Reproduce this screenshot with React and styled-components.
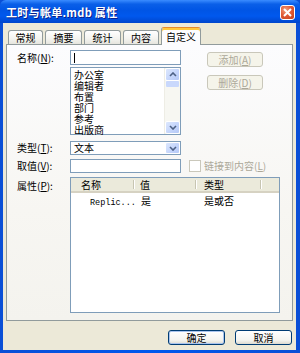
import React from 'react';
import styled, { createGlobalStyle } from 'styled-components';

const GlobalStyle = createGlobalStyle`
  html, body {
    margin: 0;
    padding: 0;
    background: #fff;
  }
  body {
    font-family: 'Noto Sans CJK SC', 'Noto Sans', sans-serif;
    font-size: 10px;
    color: #000;
  }
`;

const tabs = [
  { label: '常规', width: 35 },
  { label: '摘要', width: 37 },
  { label: '统计', width: 37 },
  { label: '内容', width: 36 },
  { label: '自定义', width: 40, active: true }
];

const names = ['办公室', '编辑者', '布置', '部门', '参考', '出版商'];

const Chevron = ({ up }) => (
  <svg width='8' height='5' viewBox='0 0 8 5'>
    <path
      d={up ? 'M1 4 L4 1 L7 4' : 'M1 1 L4 4 L7 1'}
      fill='none'
      stroke='#4d6185'
      strokeWidth='1.6'
    />
  </svg>
);

const App = () => {
  return (
    <>
      <GlobalStyle />
      <Window>
        <TitleBar>
          <Title>工时与帐单.mdb 属性</Title>
          <CloseButton>
            <svg width='9' height='9' viewBox='0 0 9 9'>
              <path d='M1 1 L8 8 M8 1 L1 8' stroke='#fff' strokeWidth='2' />
            </svg>
          </CloseButton>
        </TitleBar>
        <Body>
          <TabRow>
            {tabs.map(t => (
              <Tab key={t.label} $active={t.active} $width={t.width}>
                {t.label}
              </Tab>
            ))}
          </TabRow>
          <Panel>
            <Row>
              <Label $top={2}>
                名称(<u>N</u>):
              </Label>
              <Column>
                <TextBox>
                  <Caret />
                </TextBox>
                <ListBox>
                  <Items>
                    {names.map(n => (
                      <Item key={n}>{n}</Item>
                    ))}
                  </Items>
                  <ScrollBar>
                    <ArrowButton>
                      <Chevron up />
                    </ArrowButton>
                    <Thumb />
                    <Track />
                    <ArrowButton>
                      <Chevron />
                    </ArrowButton>
                  </ScrollBar>
                </ListBox>
              </Column>
              <SideButtons>
                <Button disabled $width={56}>
                  <span>
                    添加(<u>A</u>)
                  </span>
                </Button>
                <Button disabled $width={56}>
                  <span>
                    删除(<u>D</u>)
                  </span>
                </Button>
              </SideButtons>
            </Row>
            <Row $gap={6}>
              <Label>
                类型(<u>T</u>):
              </Label>
              <Select>
                <SelectText>文本</SelectText>
                <DropButton>
                  <Chevron />
                </DropButton>
              </Select>
            </Row>
            <Row $gap={3}>
              <Label>
                取值(<u>V</u>):
              </Label>
              <TextBox $height={14} />
              <CheckLabel>
                <CheckBox />
                <span>
                  链接到内容(<u>L</u>)
                </span>
              </CheckLabel>
            </Row>
            <Row $gap={4}>
              <Label $top={3}>
                属性(<u>P</u>):
              </Label>
              <ListView>
                <Header>
                  <HeadCell $width={63} $pad={10}>名称</HeadCell>
                  <HeadCell $width={62} $pad={6}>值</HeadCell>
                  <HeadCell $width={65} $pad={8}>类型</HeadCell>
                  <HeadCell $width={18} $last />
                </Header>
                <DataRow>
                  <Cell $width={63} $pad={19}>
                    <Mono>Replic...</Mono>
                  </Cell>
                  <Cell $width={62} $pad={7}>是</Cell>
                  <Cell $width={65} $pad={8}>是或否</Cell>
                </DataRow>
              </ListView>
            </Row>
          </Panel>
          <Footer>
            <Button $width={57} $default>
              确定
            </Button>
            <Button $width={57}>取消</Button>
          </Footer>
        </Body>
      </Window>
    </>
  );
};

const Window = styled.div`
  width: 300px;
  height: 353px;
  box-sizing: border-box;
  display: flex;
  flex-direction: column;
  background: linear-gradient(90deg, #0a4fd6 0%, #0058ee 50%, #0a4fd6 100%);
`;

const TitleBar = styled.div`
  height: 23px;
  display: flex;
  align-items: center;
  justify-content: space-between;
  padding: 1px 5px 0 6px;
  box-sizing: border-box;
  background: linear-gradient(
    180deg,
    #3a8cff 0%,
    #0a5fe8 18%,
    #0055e5 45%,
    #0058ee 70%,
    #0046cc 100%
  );
  border-radius: 6px 6px 0 0;
`;

const Title = styled.div`
  color: #fff;
  font-weight: 700;
  font-size: 11px;
  letter-spacing: 0.3px;
  text-shadow: 1px 1px 0 #0a1e8c;
`;

const CloseButton = styled.div`
  width: 15px;
  height: 15px;
  box-sizing: border-box;
  border: 1px solid #fff;
  border-radius: 3px;
  background: radial-gradient(circle at 35% 30%, #f0a080 0%, #e25b36 45%, #c2401c 100%);
  display: flex;
  align-items: center;
  justify-content: center;
`;

const Body = styled.div`
  flex: 1;
  margin: 0 4px 3px 3px;
  background: #ece9d8;
  display: flex;
  flex-direction: column;
  padding-top: 4px;
`;

const TabRow = styled.div`
  display: flex;
  align-items: flex-end;
  gap: 2px;
  padding-left: 5px;
  height: 17px;
  position: relative;
  z-index: 1;
`;

const Tab = styled.div`
  width: ${p => p.$width}px;
  height: ${p => (p.$active ? 18 : 14)}px;
  margin-bottom: ${p => (p.$active ? -1 : 0)}px;
  box-sizing: border-box;
  border: 1px solid #919b9c;
  border-bottom: none;
  border-top-color: ${p => (p.$active ? '#e68b2c' : '#919b9c')};
  border-radius: 3px 3px 0 0;
  background: ${p =>
    p.$active
      ? '#fcfcfe'
      : 'linear-gradient(180deg, #ffffff 0%, #f3f3ef 60%, #e6e5dd 100%)'};
  box-shadow: ${p => (p.$active ? 'inset 0 2px 0 #ffc83c' : 'none')};
  display: flex;
  align-items: center;
  justify-content: center;
  padding-top: ${p => (p.$active ? 1 : 0)}px;
  line-height: 1;
`;

const Panel = styled.div`
  margin-left: 3px;
  width: 287px;
  height: 277px;
  box-sizing: border-box;
  border: 1px solid #919b9c;
  background: linear-gradient(180deg, #fcfcfe 0%, #f7f6f2 60%, #f4f3ee 100%);
  padding: 5px 0 0 10px;
  display: flex;
  flex-direction: column;
`;

const Row = styled.div`
  display: flex;
  align-items: center;
  margin-top: ${p => p.$gap || 0}px;
`;

const Label = styled.div`
  width: 53px;
  flex-shrink: 0;
  align-self: ${p => (p.$top !== undefined ? 'flex-start' : 'center')};
  padding-top: ${p => p.$top || 0}px;
  line-height: 12px;
  white-space: nowrap;
`;

const Column = styled.div`
  display: flex;
  flex-direction: column;
  width: 111px;
`;

const TextBox = styled.div`
  width: 111px;
  height: ${p => p.$height || 15}px;
  box-sizing: border-box;
  border: 1px solid #7f9db9;
  background: #fff;
  display: flex;
  align-items: center;
  padding-left: 3px;
  flex-shrink: 0;
`;

const Caret = styled.span`
  width: 1px;
  height: 10px;
  background: #000;
`;

const ListBox = styled.div`
  margin-top: 2px;
  height: 68px;
  box-sizing: border-box;
  border: 1px solid #7f9db9;
  background: #fff;
  display: flex;
`;

const Items = styled.div`
  flex: 1;
  padding: 1px 0 0 3px;
`;

const Item = styled.div`
  height: 11px;
  line-height: 11px;
`;

const ScrollBar = styled.div`
  width: 15px;
  display: flex;
  flex-direction: column;
  background: #f7f7f2;
  border-left: 1px solid #eeede5;
`;

const ArrowButton = styled.div`
  height: 13px;
  box-sizing: border-box;
  border: 1px solid #fff;
  border-radius: 2px;
  background: linear-gradient(135deg, #dce7fd 0%, #c3d4fb 60%, #b6c9f6 100%);
  display: flex;
  align-items: center;
  justify-content: center;
`;

const Thumb = styled.div`
  height: 6px;
  margin: 0 1px;
  background: #c9d8fc;
  border-radius: 1px;
`;

const Track = styled.div`
  flex: 1;
`;

const SideButtons = styled.div`
  display: flex;
  flex-direction: column;
  align-self: flex-start;
  gap: 8px;
  margin-left: 26px;
  padding-top: 2px;
`;

const Button = styled.div`
  width: ${p => p.$width}px;
  height: 15px;
  box-sizing: border-box;
  border: 1px solid ${p => (p.disabled ? '#c9c7ba' : '#003c74')};
  border-radius: 3px;
  background: ${p =>
    p.disabled
      ? '#f5f4ea'
      : 'linear-gradient(180deg, #ffffff 0%, #f4f4f0 70%, #dcdad0 100%)'};
  box-shadow: ${p => (p.$default ? 'inset 0 0 0 1px #a9c4ee' : 'none')};
  color: ${p => (p.disabled ? '#aca899' : '#000')};
  display: flex;
  align-items: center;
  justify-content: center;
  line-height: 1;
`;

const Select = styled.div`
  width: 111px;
  height: 14px;
  box-sizing: border-box;
  border: 1px solid #7f9db9;
  background: #fff;
  display: flex;
  align-items: stretch;
`;

const SelectText = styled.div`
  flex: 1;
  padding-left: 3px;
  line-height: 12px;
`;

const DropButton = styled(ArrowButton)`
  width: 15px;
  height: auto;
`;

const CheckLabel = styled.div`
  display: flex;
  align-items: center;
  margin-left: 8px;
  color: #aca899;
  gap: 3px;
`;

const CheckBox = styled.div`
  width: 12px;
  height: 12px;
  box-sizing: border-box;
  border: 1px solid #cac8bb;
  background: #fff;
`;

const ListView = styled.div`
  align-self: flex-start;
  width: 210px;
  height: 136px;
  box-sizing: border-box;
  border: 1px solid #7f9db9;
  background: #fff;
`;

const Header = styled.div`
  display: flex;
  height: 15px;
  background: #ebeadb;
  border-bottom: 2px solid #d6d2c2;
  box-sizing: border-box;
`;

const HeadCell = styled.div`
  width: ${p => p.$width}px;
  flex: ${p => (p.$last ? 1 : 'none')};
  box-sizing: border-box;
  padding-left: ${p => p.$pad || 0}px;
  line-height: 13px;
  position: relative;

  &::after {
    content: '';
    display: ${p => (p.$last ? 'none' : 'block')};
    position: absolute;
    right: 0;
    top: 2px;
    bottom: 2px;
    width: 1px;
    background: #c7c5b2;
    box-shadow: 1px 0 0 #fff;
  }
`;

const DataRow = styled.div`
  display: flex;
  margin-top: 1px;
  height: 13px;
  align-items: center;
`;

const Cell = styled.div`
  width: ${p => p.$width}px;
  box-sizing: border-box;
  padding-left: ${p => p.$pad || 0}px;
  white-space: nowrap;
`;

const Mono = styled.span`
  font-family: 'Liberation Mono', monospace;
  font-size: 8.5px;
`;

const Footer = styled.div`
  display: flex;
  justify-content: flex-end;
  gap: 10px;
  padding: 9px 4px 0 0;
`;

export default App;
